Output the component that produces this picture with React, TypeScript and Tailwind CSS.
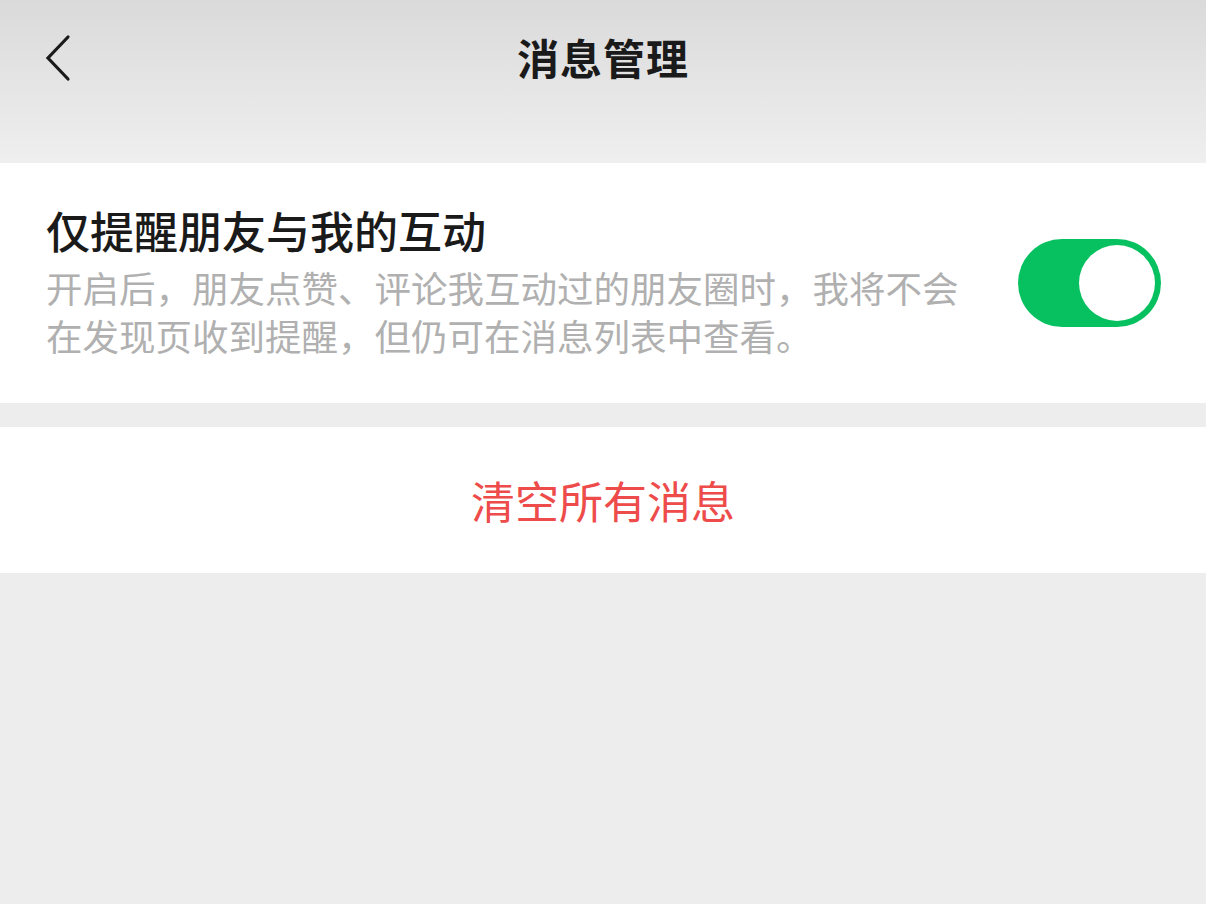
const font = { fontFamily: '"Noto Sans CJK SC", "Noto Sans", sans-serif' };

function Toggle({ on }: { on: boolean }) {
  return (
    <div
      className={`flex items-center w-[143px] h-[88px] rounded-full p-[6px] shrink-0 ${on ? 'bg-[#07c160] justify-end' : 'bg-[#e5e5e5] justify-start'}`}
    >
      <div className="w-[76px] h-[76px] rounded-full bg-white" />
    </div>
  );
}

export default function App() {
  return (
    <div className="w-[1206px] h-[904px] bg-[#ededed] flex flex-col" style={font}>
      <div className="h-[163px] bg-gradient-to-b from-[#dadada] to-[#efefef] relative">
        <div className="h-[112px] flex items-center justify-center">
          <span className="text-[42px] font-bold text-[#1a1a1a] tracking-[1px]">消息管理</span>
        </div>
        <button className="absolute left-[44px] top-[34px] w-[30px] h-[48px] flex items-center">
          <svg width="30" height="48" viewBox="0 0 30 48" fill="none" stroke="#1a1a1a" strokeWidth={3.2} strokeLinecap="round" strokeLinejoin="miter">
            <path d="M24 3 L4 24 L24 45" />
          </svg>
        </button>
      </div>

      <div className="bg-white h-[240px] flex items-center pl-[46px] pr-[45px]">
        <div className="flex-1 min-w-0">
          <div className="text-[44px] leading-[56px] text-[#1a1a1a] font-medium -mt-[4px]">仅提醒朋友与我的互动</div>
          <div className="text-[36.5px] leading-[48px] text-[#b0b0b0] mt-[6px] w-[930px]">
            <div>开启后，朋友点赞、评论我互动过的朋友圈时，我将不会</div>
            <div>在发现页收到提醒，但仍可在消息列表中查看。</div>
          </div>
        </div>
        <Toggle on />
      </div>

      <div className="h-[24px]" />

      <div className="bg-white h-[146px] flex items-center justify-center">
        <span className="text-[44px] text-[#ee4b4b]">清空所有消息</span>
      </div>
    </div>
  );
}
